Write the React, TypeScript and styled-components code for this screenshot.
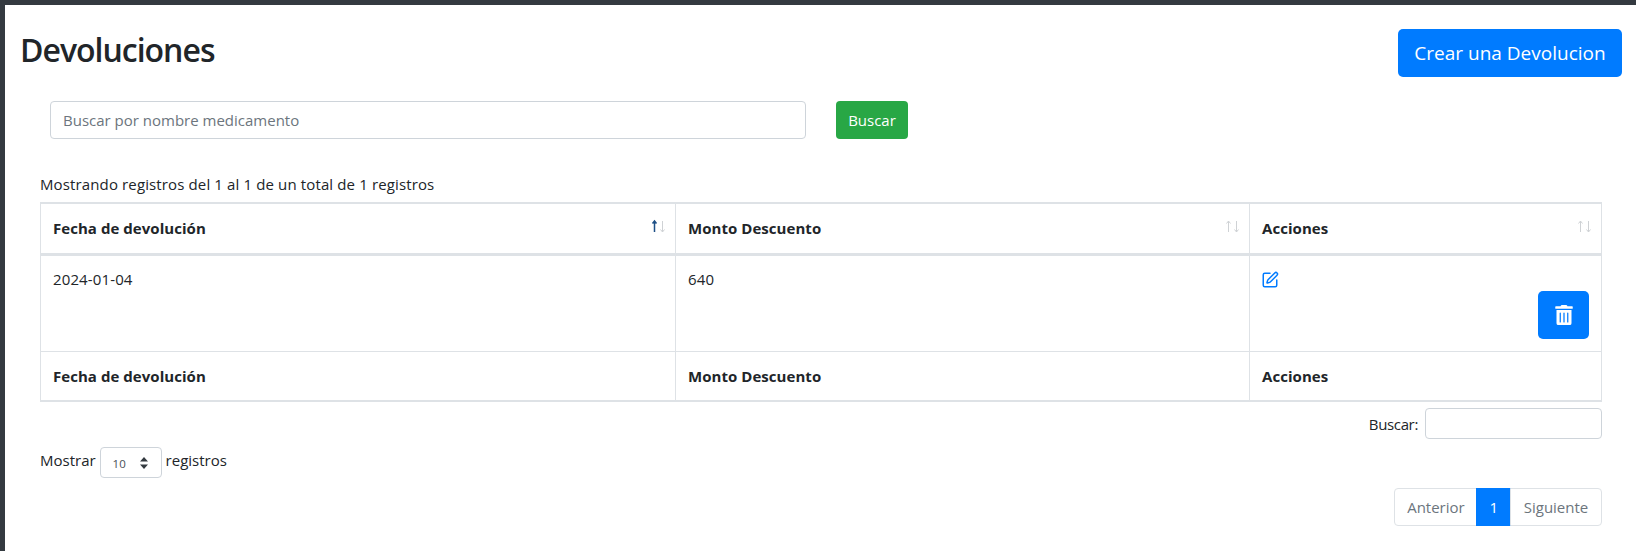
import React from "react";
import styled, { createGlobalStyle } from "styled-components";
import { FaTrashAlt } from "react-icons/fa";
import { SquarePen } from "lucide-react";

const Global = createGlobalStyle`
  html, body { margin: 0; padding: 0; background: #fff; }
  body { font-family: "Open Sans", "Noto Sans", sans-serif; font-size: 15px; color: #212529; line-height: 24px; }
  * { box-sizing: border-box; }
`;

const Page = styled.div`
  width: 1636px;
  height: 551px;
  overflow: hidden;
  border-top: 5px solid #343a40;
  border-left: 5px solid #343a40;
`;
const Header = styled.header`
  display: flex;
  justify-content: space-between;
  align-items: flex-start;
  padding: 24px 14px 0 15px;
  height: 96px;
`;
const Title = styled.h1`
  margin: 2px 0 0;
  font-size: 32px;
  line-height: 38px;
  font-weight: 600;
  letter-spacing: -1px;
`;
const Button = styled.button<{ $tone: string }>`
  border: 0;
  color: #fff;
  background: ${(p) => p.$tone};
  font-family: inherit;
  display: inline-flex;
  align-items: center;
  justify-content: center;
`;
const CreateButton = styled(Button)`
  width: 224px;
  height: 48px;
  border-radius: 5px;
  font-size: 19px;
`;
const SearchRow = styled.form`
  display: flex;
  gap: 30px;
  padding-left: 45px;
`;
const SearchInput = styled.input`
  width: 756px;
  height: 38px;
  padding: 0 12px;
  border: 1px solid #ced4da;
  border-radius: 4px;
  font: inherit;
  &::placeholder { color: #6c757d; opacity: 1; }
`;
const SearchButton = styled(Button)`
  width: 72px;
  height: 38px;
  border-radius: 4px;
  font-size: 15px;
`;
const Body = styled.section`
  padding: 0 34px 0 35px;
`;
const Info = styled.div`
  margin-top: 32px;
  height: 31px;
  line-height: 26px;
  letter-spacing: 0.13px;
`;
const Table = styled.table`
  width: 1561px;
  table-layout: fixed;
  border-collapse: collapse;
  border: 1px solid #dee2e6;
  border-top-width: 2px;
  border-bottom-width: 2px;
`;
const Cell = styled.td`
  position: relative;
  padding: 11px 12px;
  border: 1px solid #dee2e6;
  vertical-align: top;
  letter-spacing: 0.13px;
`;
const HeadCell = styled.th<{ $line?: boolean }>`
  position: relative;
  height: ${(p) => (p.$line ? 51 : 50)}px;
  padding: 0 12px;
  border: 1px solid #dee2e6;
  border-bottom-width: ${(p) => (p.$line ? 3 : 1)}px;
  text-align: left;
  font-weight: 700;
  font-size: 15px;
  letter-spacing: 0.05px;
`;
const SortIcon = styled.svg`
  position: absolute;
  top: 14px;
  right: 8px;
`;
const DataRow = styled.tr`
  height: 97px;
`;
const EditLink = styled.a`
  display: block;
  color: #007bff;
  height: 18px;
  line-height: 0;
  margin: 4px 0 0 -1px;
`;
const TrashButton = styled(Button)`
  display: flex;
  width: 51px;
  height: 48px;
  margin: 2px 0 0 auto;
  border-radius: 5px;
  font-size: 20px;
`;
const FilterRow = styled.div`
  display: flex;
  justify-content: flex-end;
  align-items: center;
  gap: 7px;
  margin-top: 6px;
  height: 31px;
`;
const FilterLabel = styled.span`
  letter-spacing: -0.35px;
`;
const FilterInput = styled.input`
  width: 177px;
  height: 31px;
  border: 1px solid #ced4da;
  border-radius: 4px;
`;
const LengthRow = styled.div`
  display: flex;
  align-items: flex-start;
  gap: 4px;
  margin-top: 8px;
  height: 31px;
`;
const LengthText = styled.span`
  margin-top: 1px;
`;
const LengthSelect = styled.div`
  position: relative;
  width: 62px;
  height: 31px;
  border: 1px solid #ced4da;
  border-radius: 4px;
  color: #495057;
  font-size: 11.5px;
  padding: 4px 0 0 12px;
`;
const Caret = styled.svg`
  position: absolute;
  right: 12px;
  top: 9px;
`;
const PagerRow = styled.nav`
  display: flex;
  justify-content: flex-end;
  margin-top: 10px;
`;
const PageLink = styled.a<{ $active?: boolean }>`
  display: flex;
  align-items: center;
  justify-content: center;
  height: 38px;
  padding: 0 12px;
  color: ${(p) => (p.$active ? "#fff" : "#6c757d")};
  background: ${(p) => (p.$active ? "#007bff" : "#fff")};
  border: 1px solid ${(p) => (p.$active ? "#007bff" : "#dee2e6")};
  margin-left: -1px;
  &:first-child { border-radius: 4px 0 0 4px; width: 83px; }
  &:last-child { border-radius: 0 4px 4px 0; width: 92px; }
`;

const Sort = ({ on }: { on?: boolean }) => (
  <SortIcon width="16" height="16" viewBox="0 0 16 16" fill="none">
    <path d="M3.500 14V3M1.500 5.500L3.500 3l2 2.500" stroke={on ? "#1d4f86" : "#cfd2d5"} strokeWidth={on ? 1.5 : 1} />
    <path d="M11.500 3v11M9.500 11.500l2 2.500 2-2.500" stroke="#cfd2d5" />
  </SortIcon>
);

export default function App() {
  return (
    <Page>
      <Global />
      <Header>
        <Title>Devoluciones</Title>
        <CreateButton $tone="#007bff">Crear una Devolucion</CreateButton>
      </Header>
      <SearchRow>
        <SearchInput placeholder="Buscar por nombre medicamento" />
        <SearchButton $tone="#28a745">Buscar</SearchButton>
      </SearchRow>
      <Body>
        <Info>Mostrando registros del 1 al 1 de un total de 1 registros</Info>
        <Table>
          <colgroup>
            <col width="635" />
            <col width="574" />
            <col width="352" />
          </colgroup>
          <thead>
            <tr>
              <HeadCell $line>Fecha de devolución<Sort on /></HeadCell>
              <HeadCell $line>Monto Descuento<Sort /></HeadCell>
              <HeadCell $line>Acciones<Sort /></HeadCell>
            </tr>
          </thead>
          <tbody>
            <DataRow>
              <Cell>2024-01-04</Cell>
              <Cell>640</Cell>
              <Cell>
                <EditLink><SquarePen size={18} strokeWidth={2} /></EditLink>
                <TrashButton $tone="#007bff"><FaTrashAlt /></TrashButton>
              </Cell>
            </DataRow>
          </tbody>
          <tfoot>
            <tr>
              <HeadCell>Fecha de devolución</HeadCell>
              <HeadCell>Monto Descuento</HeadCell>
              <HeadCell>Acciones</HeadCell>
            </tr>
          </tfoot>
        </Table>
        <FilterRow>
          <FilterLabel>Buscar:</FilterLabel>
          <FilterInput />
        </FilterRow>
        <LengthRow>
          <LengthText>Mostrar</LengthText>
          <LengthSelect>
            10
            <Caret width="10" height="12" viewBox="0 0 10 12" fill="#343a40">
              <path d="M5 0L9 4.500H1zM5 12L1 7.500h8z" />
            </Caret>
          </LengthSelect>
          <LengthText>registros</LengthText>
        </LengthRow>
        <PagerRow>
          <PageLink>Anterior</PageLink>
          <PageLink $active>1</PageLink>
          <PageLink>Siguiente</PageLink>
        </PagerRow>
      </Body>
    </Page>
  );
}
